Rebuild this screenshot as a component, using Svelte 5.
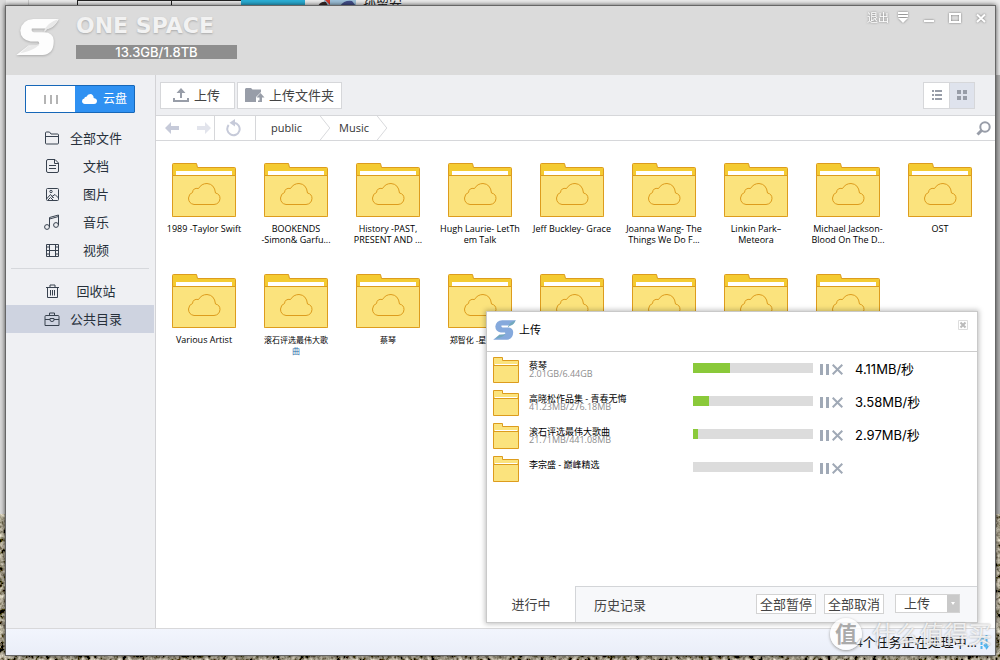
<script>
  const places = [
    { name: '全部文件', icon: 'folder' },
    { name: '文档', icon: 'doc' },
    { name: '图片', icon: 'image' },
    { name: '音乐', icon: 'music' },
    { name: '视频', icon: 'film' }
  ];
  const extras = [
    { name: '回收站', icon: 'trash' },
    { name: '公共目录', icon: 'case', active: true }
  ];
  const folders = [
    { lines: ['1989 -Taylor Swift'] },
    { lines: ['BOOKENDS', '-Simon& Garfu...'] },
    { lines: ['History -PAST,', 'PRESENT AND ...'] },
    { lines: ['Hugh Laurie- LetTh', 'em Talk'] },
    { lines: ['Jeff Buckley- Grace'] },
    { lines: ['Joanna Wang- The', 'Things We Do F...'] },
    { lines: ['Linkin Park–', 'Meteora'] },
    { lines: ['Michael Jackson-', 'Blood On The D...'] },
    { lines: ['OST'] },
    { lines: ['Various Artist'] },
    { lines: ['滚石评选最伟大歌', '曲'], cjk: true, accent: true },
    { lines: ['蔡琴'], cjk: true },
    { lines: ['郑智化 -星星点灯'], cjk: true },
    { lines: [] },
    { lines: [] },
    { lines: [] },
    { lines: [] }
  ];
  const tasks = [
    { name: '蔡琴', size: '2.01GB/6.44GB', done: 31, speed: '4.11MB/秒' },
    { name: '高晓松作品集 - 青春无悔', size: '41.23MB/276.18MB', done: 13, speed: '3.58MB/秒' },
    { name: '滚石评选最伟大歌曲', size: '21.71MB/441.08MB', done: 4, speed: '2.97MB/秒' },
    { name: '李宗盛 - 巅峰精选', size: '', done: 0, speed: '' }
  ];
</script>

{#snippet logo(fill, fold)}
  <svg class="logo" viewBox="47 55 130 113" aria-hidden="true">
    <path {fill} d="M176 57H99Q64 60 60 92Q61 120 91 125H114Q120 130 114 137H85L48 166H127Q160 163 161 127V121Q159 98 132 97H101Q92 95 95 86H145Q166 80 176 57Z" />
    <path fill={fold} d="M174 58Q140 68 130 97Q136 97 141 88Q164 84 174 58ZM60 161L84 139Q110 140 119 130Q112 150 60 161Z" />
  </svg>
{/snippet}

{#snippet sideIcon(kind)}
  <svg class="side-icon" viewBox="0 0 16 16" aria-hidden="true">
    {#if kind === 'folder'}
      <path d="M1.500 13V3Q1.500 2 2.500 2H5.500L7 4H13.500Q14.500 4 14.500 5V13Q14.500 14 13.500 14H2.500Q1.500 14 1.500 13ZM1.500 6.500H14.500" />
    {:else if kind === 'doc'}
      <path d="M4 1.500H11L14.500 5V13Q14.500 14.500 13 14.500H4Q2.500 14.500 2.500 13V3Q2.500 1.500 4 1.500ZM10.500 1.500V5.500H14.500M5 7.500H12M5 10.500H12" />
    {:else if kind === 'image'}
      <path d="M3.500 2.500H13.500Q14.500 2.500 14.500 3.500V13.500Q14.500 14.500 13.500 14.500H3.500Q2.500 14.500 2.500 13.500V3.500Q2.500 2.500 3.500 2.500ZM2.500 13L6.500 8.500L9.500 12L8 10.500L11 8.500L14.500 12M4 14L6.500 11.500L9 14" />
      <circle cx="7" cy="5.500" r="1.200" />
    {:else if kind === 'music'}
      <path d="M5.500 13V3.500L14.500 1V11M5.500 5L14.500 2.500" />
      <circle cx="3" cy="13" r="2.400" /><circle cx="12" cy="11" r="2.400" />
    {:else if kind === 'film'}
      <path d="M2.500 2.500H14.500V14.500H2.500ZM5.500 2.500V14.500M11.500 2.500V14.500M5.500 8.500H11.500M2.500 5H5.500M2.500 8.500H5.500M2.500 12H5.500M11.500 5H14.500M11.500 8.500H14.500M11.500 12H14.500" />
    {:else if kind === 'trash'}
      <path d="M2 4.500H15M6 4.500V2H11V4.500M3.500 4.500V14.500H13.500V4.500M6.500 7V12.500M8.500 7V12.500M10.500 7V12.500" />
    {:else}
      <path d="M2 4.500H14Q15 4.500 15 5.500V14.500H1V5.500Q1 4.500 2 4.500ZM5.500 4.500V2H10.500V4.500M1 8.500H6M10 8.500H15M6 7.500H10V9Q10 10.500 8 10.500Q6 10.500 6 9Z" />
    {/if}
  </svg>
{/snippet}

<div class="desktop">
  <div class="backdrop" aria-hidden="true">
    <i class="tab-a"></i><i class="tab-b"></i><i class="tab-b"></i><i class="tab-c"></i>
    <svg width="40" height="6" viewBox="0 0 40 6"><path fill="#9fc3dc" d="M6 0H38V6H6Z" /><path fill="#3a2b2b" d="M0 6Q3 1 8 2L10 6Z" /><path fill="#cf3a2c" d="M7 0H12V5Z" /><path fill="#45508c" d="M22 6Q26 0 34 1L38 6Z" /></svg>
    <b>孙留安</b>
  </div>
  <svg class="ground" aria-hidden="true">
    <filter id="gravel" x="0" y="0" width="100%" height="100%">
      <feTurbulence type="fractalNoise" baseFrequency="0.22 0.2" numOctaves="4" seed="8" />
      <feColorMatrix values="1.900 0 0 0 -0.560  1.800 0.050 0 0 -0.570  1.550 0 0.050 0 -0.540  0 0 0 0 1" />
    </filter>
    <rect width="100%" height="100%" filter="url(#gravel)" />
  </svg>

  <div class="window">
    <header>
      {@render logo('#fdfdfd', '#e8e8e8')}
      <div class="brand">
        <h1>ONE SPACE</h1>
        <div class="quota">13.3GB/1.8TB</div>
      </div>
      <div class="window-tools">
        <button class="exit">退出</button>
        <button aria-label="菜单"><svg width="12" height="14" viewBox="0 0 12 14"><path d="M1 2H11M1 5H11" stroke="#fff" stroke-width="2" /><path d="M1 7H11L6 12Z" fill="#fff" /></svg></button>
        <button aria-label="最小化"><svg width="12" height="14" viewBox="0 0 12 14"><path d="M1 10H11" stroke="#fff" stroke-width="2" /></svg></button>
        <button aria-label="最大化"><svg width="12" height="14" viewBox="0 0 12 14"><path d="M1 3H11V11H1Z" fill="none" stroke="#fff" stroke-width="2" /></svg></button>
        <button aria-label="关闭"><svg width="12" height="14" viewBox="0 0 12 14"><path d="M2 3.500L10 11M10 3.500L2 11" stroke="#fff" stroke-width="2" /></svg></button>
      </div>
    </header>

    <div class="body">
      <aside>
        <div class="switch">
          <button class="local" aria-label="本地"><i></i><i></i><i></i></button>
          <button class="cloud">
            <svg width="15" height="10" viewBox="0 0 15 10" aria-hidden="true"><path fill="#fff" d="M3 10Q0 9.500 0 7Q.2 4.800 2.300 4.500Q2.500 2.500 4.500 2.800Q5.500 0 8.300 0Q11.500.3 11.700 4Q15 4.500 15 7Q14.800 9.800 12 10Z" /></svg>
            云盘
          </button>
        </div>
        <nav>
          {#each places as p}
            <button class="place">{@render sideIcon(p.icon)}<span>{p.name}</span></button>
          {/each}
        </nav>
        <hr />
        <nav>
          {#each extras as p}
            <button class="place" class:active={p.active}>{@render sideIcon(p.icon)}<span>{p.name}</span></button>
          {/each}
        </nav>
      </aside>

      <main>
        <div class="toolbar">
          <button class="tool">
            <svg width="16" height="15" viewBox="0 0 16 15" aria-hidden="true"><path fill="#989da8" d="M8 0L12.500 5H9V10H7V5H3.500ZM0 10H2V12H14V10H16V14H0Z" /></svg>
            上传
          </button>
          <button class="tool">
            <svg width="20" height="15" viewBox="0 0 20 15" aria-hidden="true"><path fill="#989da8" d="M0 1L1 0H6L7.500 1.500H16V4L11 9V14H0ZM15.500 5L19.500 9.500H17V14H13V12.500H14.500V9.500H11.500Z" /></svg>
            上传文件夹
          </button>
          <div class="views">
            <button aria-label="列表"><svg width="10" height="10" viewBox="0 0 10 10"><path d="M0 1H2M3 1H10M0 5H2M3 5H10M0 9H2M3 9H10" stroke="#989da8" stroke-width="2" /></svg></button>
            <button class="on" aria-label="图标"><svg width="10" height="10" viewBox="0 0 10 10"><path d="M0 0H4V4H0ZM6 0H10V4H6ZM0 6H4V10H0ZM6 6H10V10H6Z" fill="#989da8" /></svg></button>
          </div>
        </div>

        <div class="path">
          <div class="history">
            <button aria-label="后退"><svg width="14" height="12" viewBox="0 0 14 12"><path fill="#c6cad9" d="M0 6L6 0V4H14V8H6V12Z" /></svg></button>
            <button aria-label="前进"><svg width="14" height="12" viewBox="0 0 14 12"><path fill="#e2e4ec" d="M14 6L8 0V4H0V8H8V12Z" /></svg></button>
          </div>
          <button class="reload" aria-label="刷新"><svg width="16" height="18" viewBox="0 0 16 18"><path d="M2.700 6A6.200 6.200 0 1 0 8 3.800" fill="none" stroke="#c6cad9" stroke-width="2" /><path fill="#c6cad9" d="M9 0V7.500L3.500 3.800Z" /></svg></button>
          <a class="crumb" href="#public">public</a>
          <svg class="chev" viewBox="0 0 11 25" aria-hidden="true"><path d="M0 0L10 12.500L0 25" /></svg>
          <a class="crumb" href="#music">Music</a>
          <svg class="chev" viewBox="0 0 11 25" aria-hidden="true"><path d="M0 0L10 12.500L0 25" /></svg>
          <button class="search" aria-label="搜索"><svg width="15" height="15" viewBox="0 0 15 15"><circle cx="9" cy="6" r="4.700" fill="none" stroke="#989da8" stroke-width="2" /><path d="M5.500 9.500L1.500 13.500" stroke="#989da8" stroke-width="3" /></svg></button>
        </div>

        <div class="files">
          {#each folders as f}
            <div class="file">
              <svg width="64" height="54" viewBox="0 0 64 54" aria-hidden="true">
                <path fill="#f4cb32" stroke="#dd9c1d" d="M.5 53.500V1.500Q.5.500 1.500.500H24.500L25.500 4.500H62.500Q63.500 4.500 63.500 5.500V53.500Z" />
                <path fill="#fff" d="M4 8H60V13H4Z" />
                <path fill="#fbe37d" stroke="#dd9c1d" d="M.5 12.500H63.500V52.500Q63.500 53.500 62.500 53.500H1.500Q.5 53.500.5 52.500Z" />
                <path fill="none" stroke="#dd9c1d" d="M22 41.500Q16.500 40.500 16.500 35Q17 30.500 20.500 29.500Q21 24.500 26.500 25.500Q29.500 20.500 35 20.500Q42.500 21 43.500 30Q48 31 48 35.500Q47.500 41 42 41.500Z" />
              </svg>
              <div class="label" class:cjk={f.cjk} class:accent={f.accent}>
                {#each f.lines as line}<span>{line}</span>{/each}
              </div>
            </div>
          {/each}
        </div>
      </main>
    </div>

    <footer>
      <span>4个任务正在处理中...</span>
      <svg width="12" height="16" viewBox="0 0 12 16" aria-hidden="true"><path d="M3.500 15V3M1 6L3.500 3L6 6M8.500 1V14M6 10.500L8.500 14L11 10.500" fill="none" stroke="#4fb4ee" stroke-width="2" stroke-dasharray="3 1" /></svg>
    </footer>

    <section class="transfer" aria-label="上传">
      <div class="transfer-head">
        {@render logo('#85a9dc', '#73a9bd')}
        <h2>上传</h2>
        <button aria-label="关闭"><svg width="10" height="10" viewBox="0 0 10 10"><path fill="none" stroke="#ddd" d="M.5.500H9.500V9.500H.5Z" /><path d="M2.500 2.500L7.500 7.500M7.500 2.500L2.500 7.500" stroke="#bbb" stroke-width="2" /></svg></button>
      </div>
      <div class="tasks">
        {#each tasks as t}
          <div class="task">
            <svg width="26" height="26" viewBox="0 0 26 26" aria-hidden="true">
              <path fill="#fbe37d" stroke="#dd9c1d" d="M.5 25.500V.5H9.500V3.500H25.500V25.500Z" />
              <path stroke="#fff" d="M2 7.500H24" /><path stroke="#dd9c1d" d="M1 8.500H25" />
            </svg>
            <div class="info"><div class="name">{t.name}</div><div class="size">{t.size}</div></div>
            <div class="bar"><i style="width: {t.done}%"></i></div>
            <button class="pause" aria-label="暂停"><svg width="9" height="11" viewBox="0 0 9 11"><path fill="#a0a9b6" d="M0 0H3V11H0ZM6 0H9V11H6Z" /></svg></button>
            <button class="cancel" aria-label="取消"><svg width="11" height="11" viewBox="0 0 11 11"><path d="M.7.700L10.300 10.300M10.300.700L.7 10.300" stroke="#a0a9b6" stroke-width="2" /></svg></button>
            <span class="speed">{t.speed}</span>
          </div>
        {/each}
      </div>
      <div class="tabs">
        <button class="tab current">进行中</button>
        <button class="tab">历史记录</button>
        <div class="actions">
          <button>全部暂停</button>
          <button>全部取消</button>
          <div class="pick">
            <select aria-label="类型"><option>上传</option></select>
            <span aria-hidden="true"></span>
          </div>
        </div>
      </div>
    </section>

    <div class="watermark"><b>值</b><span>什么值得买</span></div>
  </div>
</div>

<style>
  :global(body) { margin: 0; }
  * { box-sizing: border-box; }
  button, select { font: inherit; color: inherit; border: 0; padding: 0; margin: 0; background: none; }
  button { display: flex; align-items: center; justify-content: center; }
  svg { display: block; flex: none; }

  .desktop {
    position: relative;
    display: flex;
    min-height: 100vh;
    padding: 6px 5px 5px 6px;
    overflow: hidden;
    background:
      linear-gradient(#dcdcdc, #dcdcdc) left / 6px 100% no-repeat,
      linear-gradient(#ededed 75px, #b4b4b4 75px);
    font-family: "Open Sans", "Noto Sans CJK SC", sans-serif;
    font-size: 13px;
    line-height: 20px;
    color: #333;
  }
  .backdrop {
    position: absolute;
    top: 0;
    left: 28px;
    display: flex;
    height: 6px;
    overflow: hidden;
  }
  .backdrop i { border: solid #222; border-width: 1px 0 0 1px; }
  .backdrop .tab-a { width: 49px; border-width: 0 0 0 1px; border-color: #ccc; }
  .backdrop .tab-b { width: 94px; background: #eee; }
  .backdrop .tab-b + .tab-b { width: 70px; }
  .backdrop .tab-c { width: 64px; background: #2bb0d8; border: 0; }
  .backdrop svg { margin-left: 13px; }
  .backdrop b { margin-left: 5px; font-size: 13px; font-weight: 400; line-height: 6px; color: #222; }
  .ground { position: absolute; left: 0; bottom: 0; width: 100%; height: 146px; }

  .window {
    position: relative;
    display: flex;
    flex: 1;
    flex-direction: column;
    background: #fff;
    box-shadow: 0 0 0 1px #666, 0 0 5px 1px rgba(0, 0, 0, .7);
  }
  header { display: flex; height: 69px; padding: 0 8px 0 10px; background: #dbdbdb; }
  header .logo { width: 43px; height: 38px; margin-top: 12px; filter: drop-shadow(0 1px 1px #aaa); }
  .brand { margin-left: 17px; width: 161px; }
  h1 {
    margin: 8px 0 0;
    font: 700 22px/24px "DejaVu Sans", sans-serif;
    color: #f2f2f2;
    text-shadow: 0 1px 2px #aaa;
    white-space: nowrap;
  }
  .quota {
    height: 14px;
    margin-top: 7px;
    background: #8e8e8e;
    color: #fff;
    font: 500 13px/14px Inter, sans-serif;
    text-align: center;
  }
  .window-tools { display: flex; align-items: flex-start; margin: 5px 0 0 auto; gap: 14px; color: #fff; }
  .window-tools button { height: 14px; filter: drop-shadow(0 0 1px #777); }
  .window-tools .exit { font-size: 11px; margin-right: -6px; }

  .body { display: flex; flex: 1; }
  aside { width: 150px; flex: none; padding-top: 10px; background: #eff0f3; border-right: 1px solid #d3d3d6; color: #27303b; }
  .switch { display: flex; width: 110px; height: 28px; margin: 0 0 11px 19px; border: 1px solid #1667b8; border-radius: 1px; background: #fff; }
  .local { flex: 0 0 49px; gap: 4px; }
  .local i { width: 2px; height: 9px; background: #b4b4b4; }
  .cloud { flex: 1; gap: 6px; background: #2f91f2; color: #fff; font-size: 12px; }
  .place { width: 148px; height: 28px; padding-left: 38px; gap: 10px; justify-content: flex-start; }
  .place span { width: 52px; text-align: center; }
  .active { background: #ced3e0; }
  .side-icon { width: 16px; height: 16px; fill: none; stroke: #38424f; }
  hr { height: 1px; margin: 4px 6px 8px 5px; border: 0; background: #d6d8dc; }

  main { flex: 1; min-width: 0; }
  .toolbar { display: flex; align-items: center; height: 40px; padding: 0 20px 0 4px; gap: 2px; background: #eeeff2; }
  .tool { height: 27px; padding: 0 14px 0 12px; gap: 5px; background: #fff; border: 1px solid #d6d7da; color: #444; }
  .tool + .tool { padding: 0 7px; gap: 4px; }
  .views { display: flex; height: 27px; margin-left: auto; border: 1px solid #d6d7da; background: #fff; }
  .views button { width: 25px; }
  .views .on { background: #dfe3ed; border-left: 1px solid #d6d7da; }
  .path { display: flex; height: 26px; border: solid #d6d7da; border-width: 1px 0; }
  .history { display: flex; width: 59px; padding: 0 3px 0 9px; justify-content: space-between; border-right: 1px solid #d6d7da; }
  .reload { width: 41px; padding-right: 2px; border-right: 1px solid #d6d7da; }
  .crumb { padding: 0 8px; font-size: 11px; line-height: 24px; color: #333; text-decoration: none; }
  .reload + .crumb { padding: 0 18px 0 15px; }
  .chev { width: 11px; height: 24px; fill: none; stroke: #d6d7da; }
  .search { margin: 0 4px 0 auto; }

  .files { display: grid; grid-template-columns: repeat(auto-fill, 92px); grid-auto-rows: 111px; padding: 22px 0 0 2px; }
  .file { display: flex; flex-direction: column; align-items: center; gap: 6px; }
  .label { display: flex; flex-direction: column; align-items: center; font-size: 9px; line-height: 11px; color: #000; white-space: nowrap; }
  .label.cjk { font-size: 8px; }
  .label.accent span + span { color: #2d6da8; }

  footer {
    display: flex;
    align-items: center;
    justify-content: flex-end;
    height: 27px;
    padding-right: 5px;
    gap: 1px;
    border-top: 1px solid #d8d8da;
    background: linear-gradient(#f2f5fd, #eaeef8);
    color: #111;
  }

  .transfer {
    position: absolute;
    right: 17px;
    bottom: 32px;
    display: flex;
    flex-direction: column;
    width: 492px;
    height: 312px;
    background: #fff;
    border: 1px solid #c9c9c9;
    box-shadow: 0 0 5px 1px rgba(0, 0, 0, .25);
  }
  .transfer-head { display: flex; align-items: center; height: 40px; padding: 0 9px 3px 6px; border-bottom: 1px solid #ccc; }
  .transfer-head .logo { width: 23px; height: 20px; }
  h2 { margin: 0 auto 0 3px; font-size: 11px; font-weight: 400; color: #000; }
  .transfer-head button { align-self: flex-start; margin-top: 8px; }
  .tasks { flex: 1; padding: 5px 0 0 6px; }
  .task { display: flex; height: 33px; }
  .info { flex: 1; margin-left: 10px; font-size: 9px; line-height: 8px; color: #000; }
  .name { padding-top: 5px; }
  .size { color: #8e8e8e; }
  .bar { width: 120px; height: 10px; margin-top: 6px; background: #dcdcdc; }
  .bar i { display: block; height: 100%; background: #8ac93a; }
  .pause, .cancel { align-self: flex-start; margin-top: 7px; }
  .pause { margin-left: 7px; }
  .cancel { margin-left: 3px; }
  .speed { width: 122px; margin-left: 12px; padding-top: 2px; font-family: Inter, "Noto Sans CJK SC", sans-serif; color: #000; }
  .tabs { display: flex; height: 36px; background: #f7f8fa; color: #444; border-top: 1px solid #d3d5d8; }
  .tab { padding: 0 18px; }
  .current { width: 89px; margin-top: -1px; background: #fff; border-right: 1px solid #d3d5d8; }
  .actions { display: flex; align-items: center; margin-left: auto; padding: 0 17px 2px 0; gap: 8px; }
  .actions button { height: 20px; padding: 0 3px; background: #fff; border: 1px solid #d3d3d3; }
  .pick { display: flex; width: 65px; height: 19px; margin-left: 3px; background: #fff; border: 1px solid #d3d3d3; }
  .pick select { flex: 1; min-width: 0; padding-left: 8px; line-height: 17px; appearance: none; }
  .pick span { display: flex; width: 12px; align-items: center; justify-content: center; background: #c9c9c9; }
  .pick span::after { content: ""; border: 2px solid transparent; border-top: 3px solid #fff; border-bottom: 0; }

  .watermark { position: absolute; right: 3px; bottom: 5px; display: flex; align-items: center; gap: 10px; pointer-events: none; color: rgba(255, 255, 255, .8); text-shadow: 0 0 2px #999; font-size: 24px; line-height: 32px; }
  .watermark b { width: 32px; height: 32px; border-radius: 50%; background: rgba(255, 255, 255, .8); box-shadow: 0 1px 3px #999; color: #aaa; font-size: 22px; line-height: 30px; text-align: center; text-shadow: none; }
</style>
